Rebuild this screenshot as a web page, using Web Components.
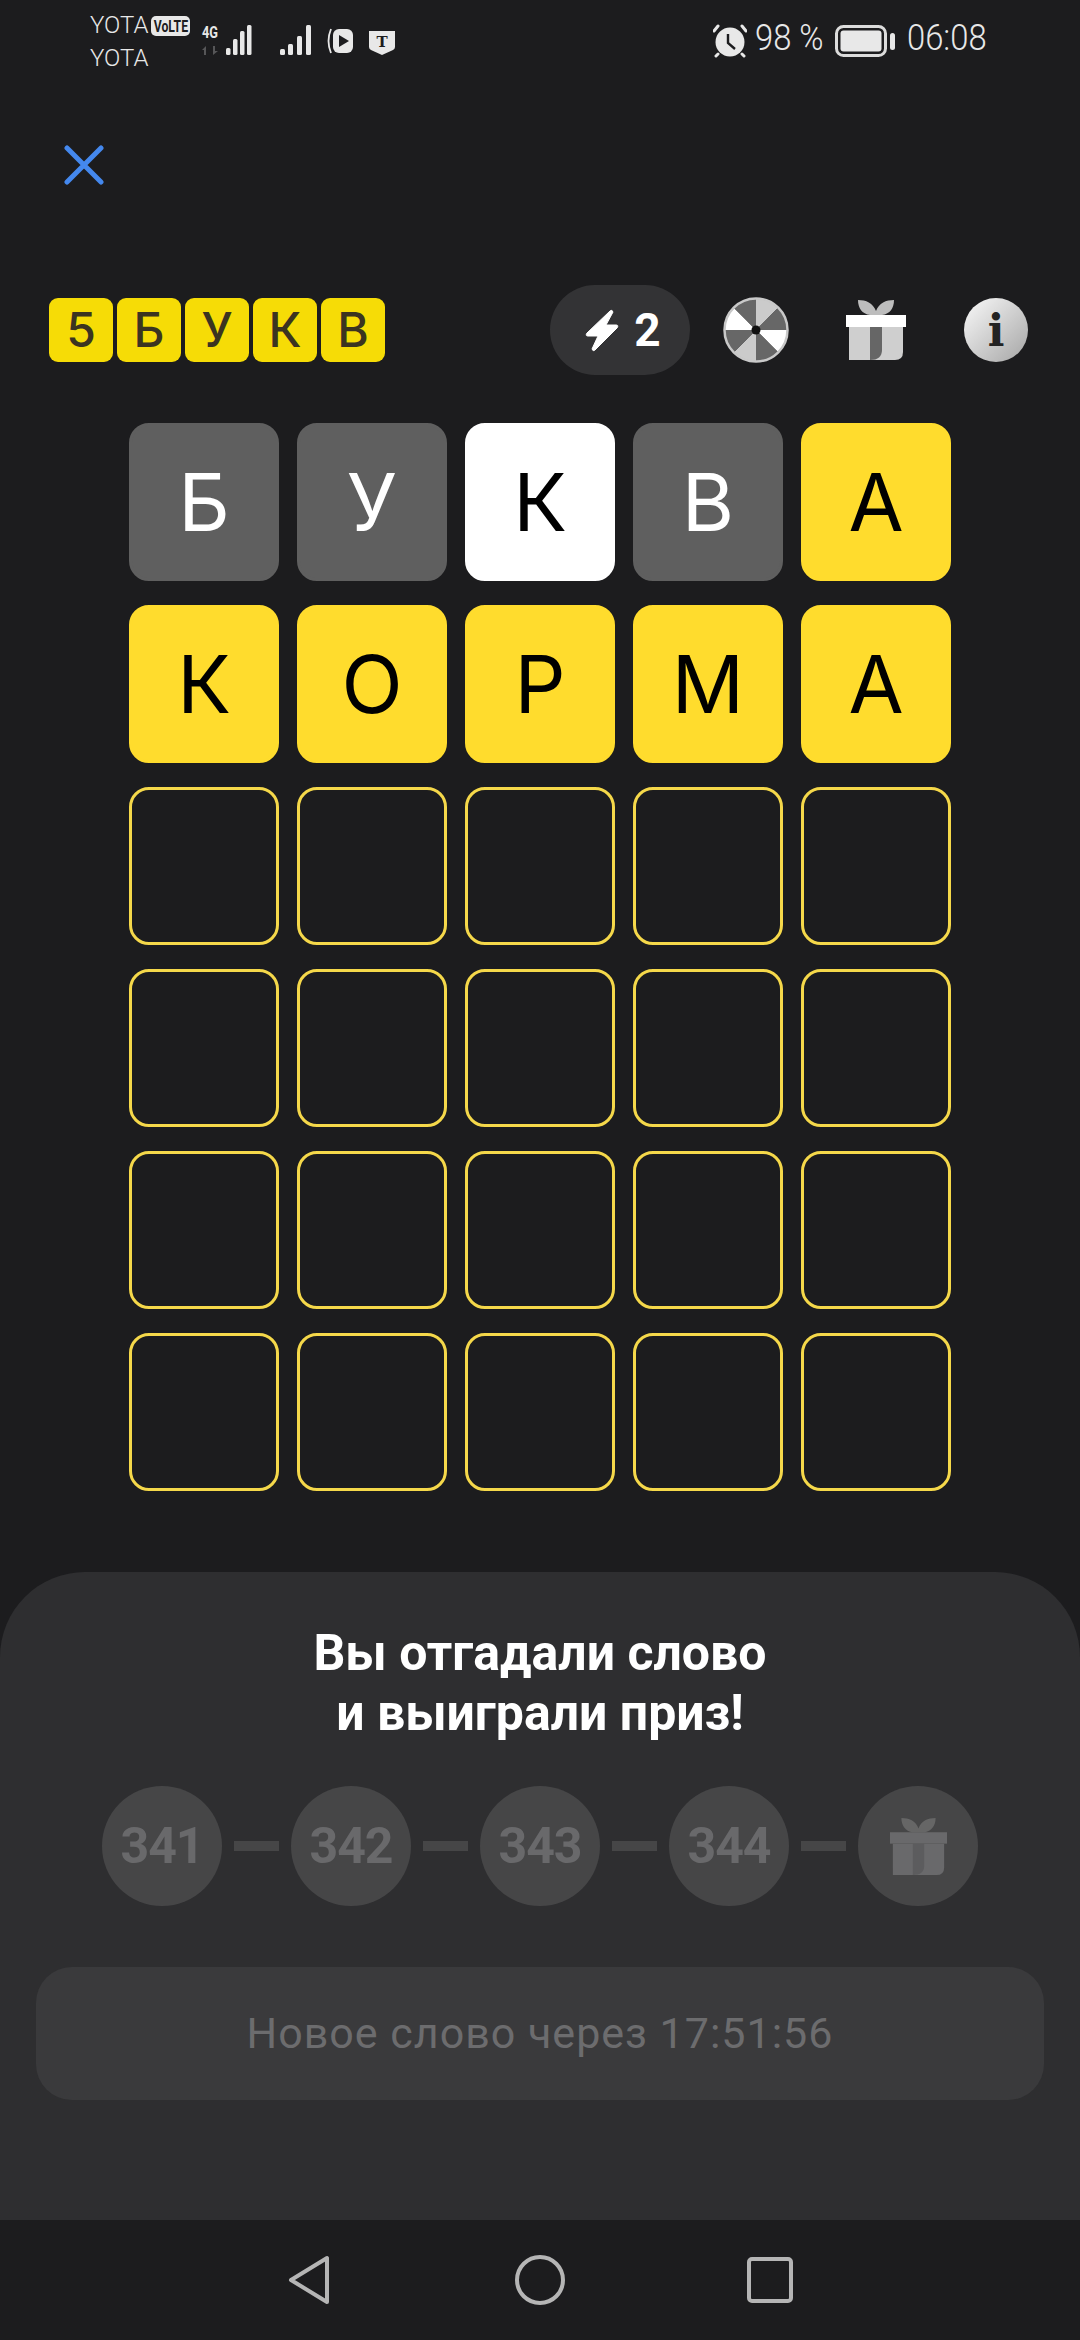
<!DOCTYPE html>
<html lang="ru"><head><meta charset="utf-8"><title>5 букв</title>
<style>
html,body{margin:0;padding:0;background:#1c1c1e}
body{width:1080px;height:2340px;overflow:hidden;font-family:"Roboto","Noto Sans",sans-serif}
game-screen{width:1080px;height:2340px}
</style></head><body>
<game-screen></game-screen>
<script>
const GIFT=(w,h,a,b,c,d)=>`<svg width="${w}" height="${h}" viewBox="0 0 60 60" style="display:block">
<path d="M12 0C20 0 27 3 30 11C33 3 40 0 48 0C48 8 44 14 36 15H24C16 14 12 8 12 0Z" fill="${a}"/>
<rect x="0" y="15" width="60" height="12" fill="${b}"/>
<path d="M3 27H57V52Q57 60 49 60H3Z" fill="${c}"/>
<path d="M24 27H36V50Q36 60 24 60Z" fill="${d}"/></svg>`;
function def(name,css,html){
  customElements.define(name,class extends HTMLElement{
    constructor(){super();const s=this.attachShadow({mode:"open"});
      s.innerHTML=`<style>${css}</style>`+html;}
  });
}
def("status-bar",`
:host{display:flex;justify-content:space-between;height:80px;box-sizing:border-box;padding:16px 91px 0 90px;color:#e8e8e8;font:300 24px/33px Roboto,sans-serif}
.l,.r{display:flex;align-items:flex-start}
.c{width:56px}.c div{height:33px;line-height:19px}
.v{width:39px;height:20px;margin:0 0 0 5px;background:#e8e8e8;border-radius:5px;color:#1c1c1e;font:700 17px/20px Roboto,sans-serif;text-align:center;overflow:hidden}
.v span{display:inline-block;transform:scaleX(.72);transform-origin:center;margin:0 -10px}
svg{display:block}
.t{font-size:36px;line-height:44px;height:44px;white-space:nowrap}
.t span{display:inline-block;transform:scaleX(.91);transform-origin:left center}
`,`<div class="l"><div class="c"><div>YOTA</div><div>YOTA</div></div><div class="v"><span>VoLTE</span></div>
<svg style="margin-left:11px" width="51" height="40" viewBox="0 0 51 40">
<text x="1" y="22" textLength="16" lengthAdjust="spacingAndGlyphs" font-family="Roboto" font-weight="700" font-size="17" fill="#e8e8e8">4G</text>
<path d="M5 39V30L1 34H3V39ZM12 30V39L17 35H14V30Z" fill="#565658"/>
<g fill="#e8e8e8"><rect x="25" y="32" width="4.5" height="7" rx="1.5"/><rect x="32" y="23" width="4.5" height="16" rx="1.5"/><rect x="39" y="15" width="4.5" height="24" rx="1.5"/><rect x="46" y="9" width="4.5" height="30" rx="1.5"/></g></svg>
<svg style="margin-left:28px" width="33" height="40" viewBox="0 0 33 40"><g fill="#e8e8e8"><rect x="0" y="33" width="5" height="6" rx="1.5"/><rect x="8" y="28" width="5" height="11" rx="1.5"/><rect x="17" y="20" width="5" height="19" rx="1.5"/><rect x="26" y="9" width="5" height="30" rx="1.5"/></g></svg>
<svg style="margin-left:14px" width="26" height="40" viewBox="0 0 26 40"><path d="M4 13Q-1 25 4 37" stroke="#e8e8e8" stroke-width="1.8" fill="none"/><rect x="6" y="13" width="20" height="24" rx="6" fill="#e8e8e8"/><path d="M12 19L22 25L12 31Z" fill="#1c1c1e"/></svg>
<svg style="margin-left:16px" width="26" height="40" viewBox="0 0 26 40"><path d="M0 15H26V31Q26 33 24 34L13 39L2 34Q0 33 0 31Z" fill="#e8e8e8"/><text x="13" y="31" text-anchor="middle" font-family="DejaVu Serif" font-weight="700" font-size="15" fill="#1c1c1e">T</text></svg>
</div>
<div class="r">
<svg style="margin-top:8px" width="34" height="34" viewBox="0 0 34 34"><circle cx="17" cy="18" r="14.5" fill="#e8e8e8"/><path d="M15 10V19L22 25" stroke="#1c1c1e" stroke-width="2.4" fill="none"/><path d="M1 7L5 2M33 7L29 2M3 32L5 30M31 32L29 30" stroke="#e8e8e8" stroke-width="3" stroke-linecap="round"/></svg>
<div class="t" style="margin-left:8px;width:72px"><span>98 %</span></div>
<svg style="margin:9px 0 0 8px" width="60" height="32" viewBox="0 0 60 32"><rect x="1.5" y="1.5" width="49" height="29" rx="7" fill="none" stroke="#dcdcdc" stroke-width="3"/><rect x="5.5" y="5.5" width="41" height="21" rx="3" fill="#e8e8e8"/><rect x="55" y="8" width="5" height="17" rx="2.5" fill="#e8e8e8"/></svg>
<div class="t" style="margin-left:12px;width:82px"><span>06:08</span></div></div>`);

def("close-row",`:host{display:block;height:205px;box-sizing:border-box;padding:65px 0 0 64px}svg{display:block}`,
`<svg width="40" height="40" viewBox="0 0 40 40"><path d="M3 3L37 37M37 3L3 37" stroke="#4488ee" stroke-width="5" stroke-linecap="round"/></svg>`);

def("logo-tile",`:host{display:flex;align-items:center;justify-content:center;width:64px;height:64px;border-radius:9px;background:#f6dc06;color:#3b3420;font:500 48px/1 Inter,"Noto Sans",sans-serif}`,`<slot></slot>`);
def("game-logo",`:host{display:flex;gap:4px}`,`<slot></slot>`);
def("energy-pill",`:host{display:flex;align-items:center;justify-content:center;gap:15px;box-sizing:border-box;width:140px;height:90px;padding-left:6px;border-radius:45px;background:#333335;color:#fff;font:700 46px/1 Roboto,sans-serif}svg{display:block}`,
`<svg width="34" height="43" viewBox="0 0 34 43"><path d="M25 2L2 24Q0 27 3 27H13L7 40Q8 43 10 41L32 19Q34 16 31 16H21L28 3Q27 0 25 2Z" fill="#fff" stroke="#fff" stroke-width="1" stroke-linejoin="round"/></svg><slot></slot>`);
const sectors=()=>{const col=["#cbcbcb","#676767","#fff","#676767","#cbcbcb","#676767","#fff","#676767"];let o="";
  for(let i=0;i<8;i++){const a=(i*45-90)*Math.PI/180,b=((i+1)*45-90)*Math.PI/180;
    o+=`<path d="M33 33L${(33+31*Math.cos(a)).toFixed(2)} ${(33+31*Math.sin(a)).toFixed(2)}A31 31 0 0 1 ${(33+31*Math.cos(b)).toFixed(2)} ${(33+31*Math.sin(b)).toFixed(2)}Z" fill="${col[i]}"/>`;}
  return o;};
def("wheel-icon",`:host{display:block;width:66px;height:66px}svg{display:block}`,
`<svg width="66" height="66" viewBox="0 0 66 66">${sectors()}<circle cx="33" cy="33" r="31.5" fill="none" stroke="#c9c9c9" stroke-width="2.5"/><circle cx="33" cy="33" r="4.5" fill="#111"/></svg>`);
def("gift-icon",`:host{display:block;width:60px;height:60px}`,GIFT(60,60,"#bdbdbd","#fff","#cfcfcf","#666"));
def("info-icon",`:host{display:block;width:64px;height:64px}svg{display:block}`,
`<svg width="64" height="64" viewBox="0 0 64 64"><defs><linearGradient id="g" x1="0" y1="0" x2="1" y2="1"><stop offset="0" stop-color="#fafafa"/><stop offset="1" stop-color="#a5a5a5"/></linearGradient></defs><circle cx="32" cy="32" r="32" fill="url(#g)"/><text x="32" y="48" text-anchor="middle" font-family="DejaVu Serif" font-weight="700" font-size="44" fill="#222">i</text></svg>`);
def("game-header",`:host{display:flex;align-items:center;height:90px;box-sizing:border-box;padding:0 52px 0 49px}
.s{flex:1}`,`<game-logo><logo-tile>5</logo-tile><logo-tile>Б</logo-tile><logo-tile>У</logo-tile><logo-tile>К</logo-tile><logo-tile>В</logo-tile></game-logo>
<div class="s"></div><energy-pill>2</energy-pill><wheel-icon style="margin-left:33px"></wheel-icon><gift-icon style="margin-left:57px"></gift-icon><info-icon style="margin-left:58px"></info-icon>`);

def("letter-tile",`:host{display:flex;align-items:center;justify-content:center;box-sizing:border-box;width:150px;height:158px;border-radius:20px;border:3px solid #f5d84a;font:400 80px/1 Inter,"Noto Sans",sans-serif;color:#000}
:host([s=gray]){background:#5f5f5f;border-color:#5f5f5f;color:#fff}
:host([s=white]){background:#fff;border-color:#fff}
:host([s=yellow]){background:#ffdc2d;border-color:#ffdc2d}`,`<slot></slot>`);
const row=(w,st)=>[...Array(5)].map((_,i)=>`<letter-tile${st?` s="${st[i]}"`:""}>${w?w[i]:""}</letter-tile>`).join("");
def("word-grid",`:host{display:grid;grid-template-columns:repeat(5,150px);grid-auto-rows:158px;column-gap:18px;row-gap:24px;margin:48px 0 0 129px}`,
row("БУКВА",["gray","gray","white","gray","yellow"])+row("КОРМА",["yellow","yellow","yellow","yellow","yellow"])+row()+row()+row()+row());

def("prize-step",`:host{display:flex;align-items:center;justify-content:center;width:120px;height:120px;border-radius:50%;background:#464647;color:#69696b;font:700 50px/1 Roboto,sans-serif;letter-spacing:-1px}`,`<slot></slot>`);
def("prize-dash",`:host{display:block;width:45px;height:10px;background:#464647}`,``);
def("prize-track",`:host{display:flex;align-items:center;justify-content:center;gap:12px;margin-top:43px}`,
`<prize-step>341</prize-step><prize-dash></prize-dash><prize-step>342</prize-step><prize-dash></prize-dash><prize-step>343</prize-step><prize-dash></prize-dash><prize-step>344</prize-step><prize-dash></prize-dash><prize-step>${GIFT(57,57,"#666","#69696b","#69696b","#5c5c5e")}</prize-step>`);
def("timer-button",`:host{display:flex;align-items:center;justify-content:center;height:133px;margin:61px 36px 0;border-radius:36px;background:#3a3a3c;color:#6c6c6e;font:400 43px/1 "Roboto",sans-serif;letter-spacing:1px}`,`<slot></slot>`);
def("win-sheet",`:host{display:block;box-sizing:border-box;height:648px;margin-top:auto;padding-top:51px;background:#2e2e30;border-radius:85px 85px 0 0}
h2{margin:0;text-align:center;color:#fff;font:700 50px/60px Roboto,sans-serif}`,
`<h2>Вы отгадали слово<br>и выиграли приз!</h2><prize-track></prize-track><timer-button>Новое слово через 17:51:56</timer-button>`);
def("nav-bar",`:host{display:flex;height:120px;background:#1c1c1e;align-items:center}svg{display:block}`,
`<svg style="margin-left:288px" width="41" height="50" viewBox="0 0 41 50"><path d="M39 3V47L3 25Z" fill="none" stroke="#b5b5b5" stroke-width="4" stroke-linejoin="round"/></svg>
<svg style="margin-left:186px" width="50" height="50" viewBox="0 0 50 50"><circle cx="25" cy="25" r="23" fill="none" stroke="#b5b5b5" stroke-width="4"/></svg>
<svg style="margin-left:182px" width="46" height="46" viewBox="0 0 46 46"><rect x="2" y="2" width="42" height="42" rx="3" fill="none" stroke="#b5b5b5" stroke-width="4"/></svg>`);
def("game-screen",`:host{display:flex;flex-direction:column;background:#1c1c1e}`,
`<status-bar></status-bar><close-row></close-row><game-header></game-header><word-grid></word-grid><win-sheet></win-sheet><nav-bar></nav-bar>`);
</script></body></html>
